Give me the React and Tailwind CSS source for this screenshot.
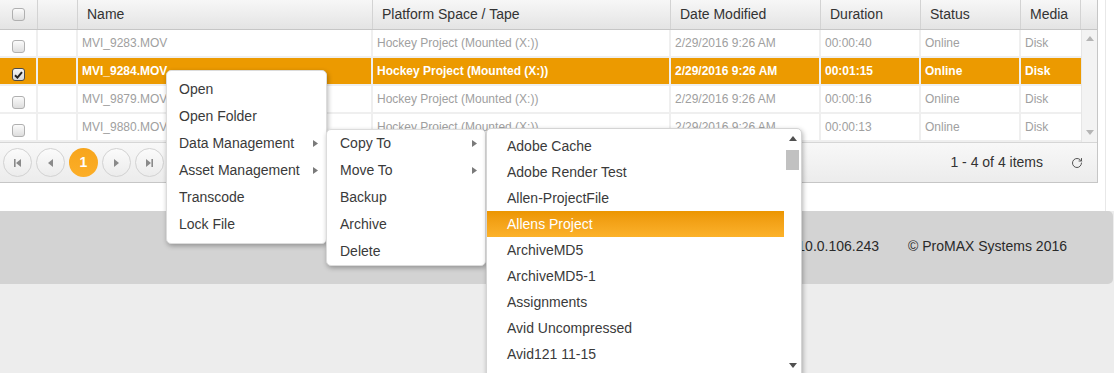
import React from "react";
import { RotateCw } from "lucide-react";

function Checkbox({ checked }) {
  return (
    <span
      className={`mt-[7px] flex h-[13px] w-[13px] items-center justify-center rounded-[3px] border ${
        checked
          ? "border-[#4a4a4a] bg-gradient-to-b from-[#f4f4f4] to-[#d8d8d8]"
          : "border-[#b0b0b0] bg-gradient-to-b from-[#fbfbfb] to-[#dedede]"
      }`}
    >
      {checked && (
        <svg width="9" height="8" viewBox="0 0 9 8">
          <path d="M1 4.3 L3.4 6.6 L8 1.2" stroke="#222" strokeWidth="2" fill="none" />
        </svg>
      )}
    </span>
  );
}

function Arrow() {
  return (
    <svg width="5" height="7" viewBox="0 0 5 7">
      <path d="M0 0 L5 3.5 L0 7Z" fill="#7a7a7a" />
    </svg>
  );
}

const rows = [
  { name: "MVI_9283.MOV", dur: "00:00:40" },
  { name: "MVI_9284.MOV", dur: "00:01:15", sel: true },
  { name: "MVI_9879.MOV", dur: "00:00:16" },
  { name: "MVI_9880.MOV", dur: "00:00:13" },
];

const headers = [
  { w: "w-[295px]", t: "Name" },
  { w: "w-[298px]", t: "Platform Space / Tape" },
  { w: "w-[150px]", t: "Date Modified" },
  { w: "w-[100px]", t: "Duration" },
  { w: "w-[100px]", t: "Status" },
  { w: "w-[60px]", t: "Media" },
];

function PagerBtn({ children }) {
  return (
    <div className="flex h-[29px] w-[29px] items-center justify-center rounded-full border border-[#d2d2d2] bg-gradient-to-b from-[#fbfbfb] to-[#ececec]">
      {children}
    </div>
  );
}

const listItems = [
  "Adobe Cache",
  "Adobe Render Test",
  "Allen-ProjectFile",
  "Allens Project",
  "ArchiveMD5",
  "ArchiveMD5-1",
  "Assignments",
  "Avid Uncompressed",
  "Avid121 11-15",
];

export default function App() {
  return (
    <div className="relative h-[373px] w-[1114px] overflow-hidden bg-[#ededed] font-['Liberation_Sans',Arial,sans-serif]">
      {/* white content area */}
      <div className="h-[211px] w-full bg-white">
        <div className="h-full w-[1106px] border-r border-[#e8e8e8]">
          <div className="w-[1098px] border-r border-b border-[#c6c6c6]">
            {/* header */}
            <div className="flex h-[30px] border-b border-[#c6c6c6] bg-gradient-to-b from-[#f7f7f7] to-[#e4e4e4] text-[14px] text-[#333]">
              <div className="flex w-[38px] justify-center border-r border-[#d3d3d3] pt-[8px]">
                <span className="flex h-[13px] w-[13px] rounded-[3px] border border-[#b0b0b0] bg-gradient-to-b from-[#fbfbfb] to-[#dedede]" />
              </div>
              <div className="w-[40px] border-r border-[#d3d3d3]" />
              {headers.map((h) => (
                <div key={h.t} className={`${h.w} flex items-center border-r border-[#d3d3d3] pl-[9px]`}>
                  {h.t}
                </div>
              ))}
              <div className="w-[16px]" />
            </div>
            {/* body */}
            <div className="flex">
              <div className="w-[1081px]">
                {rows.map((r) => (
                  <div
                    key={r.name}
                    className={`flex h-[28px] border-b-2 border-[#efefef] text-[12px] ${
                      r.sel ? "bg-[#ec9a00] font-bold text-white" : "bg-white text-[#a0a0a0]"
                    }`}
                  >
                    <div className="flex w-[38px] items-start justify-center border-r-2 border-[#efefef] pt-[3px]">
                      <Checkbox checked={r.sel} />
                    </div>
                    <div className="w-[40px] border-r-2 border-[#efefef]" />
                    <div className="flex w-[295px] items-center border-r-2 border-[#efefef] pl-[4px]">{r.name}</div>
                    <div className="flex w-[298px] items-center border-r-2 border-[#efefef] pl-[4px]">
                      Hockey Project (Mounted (X:))
                    </div>
                    <div className="flex w-[150px] items-center border-r-2 border-[#efefef] pl-[4px]">2/29/2016 9:26 AM</div>
                    <div className="flex w-[100px] items-center border-r-2 border-[#efefef] pl-[4px]">{r.dur}</div>
                    <div className="flex w-[100px] items-center border-r-2 border-[#efefef] pl-[4px]">Online</div>
                    <div className="flex w-[60px] items-center pl-[4px]">Disk</div>
                  </div>
                ))}
              </div>
              <div className="flex h-[112px] w-[16px] flex-col items-center justify-between border-l border-[#e6e6e6] bg-[#f3f3f3] pt-[6px] pb-[7px]">
                <svg width="8" height="5" viewBox="0 0 8 5">
                  <path d="M0 5 L4 0 L8 5Z" fill="#b5b5b5" />
                </svg>
                <svg width="8" height="5" viewBox="0 0 8 5">
                  <path d="M0 0 L4 5 L8 0Z" fill="#b5b5b5" />
                </svg>
              </div>
            </div>
            {/* pager */}
            <div className="flex h-[40px] items-center border-t border-[#d6d6d6] bg-gradient-to-b from-[#f8f8f8] to-[#ececec] pl-[3px] pr-[14px]">
              <div className="flex items-center gap-[4px]">
                <PagerBtn>
                  <svg width="7" height="8" viewBox="0 0 7 8">
                    <rect x="0" y="0" width="1.6" height="8" fill="#8a8a8a" />
                    <path d="M7 0 L2 4 L7 8Z" fill="#8a8a8a" />
                  </svg>
                </PagerBtn>
                <PagerBtn>
                  <svg width="5" height="8" viewBox="0 0 5 8">
                    <path d="M5 0 L0 4 L5 8Z" fill="#8a8a8a" />
                  </svg>
                </PagerBtn>
                <div className="flex h-[29px] w-[29px] items-center justify-center rounded-full bg-gradient-to-b from-[#f7a51c] to-[#fcae27] text-[14px] font-bold text-white">
                  1
                </div>
                <PagerBtn>
                  <svg width="5" height="8" viewBox="0 0 5 8">
                    <path d="M0 0 L5 4 L0 8Z" fill="#8a8a8a" />
                  </svg>
                </PagerBtn>
                <PagerBtn>
                  <svg width="7" height="8" viewBox="0 0 7 8">
                    <path d="M0 0 L5 4 L0 8Z" fill="#8a8a8a" />
                    <rect x="5.4" y="0" width="1.6" height="8" fill="#8a8a8a" />
                  </svg>
                </PagerBtn>
              </div>
              <div className="ml-auto text-[14px] text-[#333]">1 - 4 of 4 items</div>
              <RotateCw className="ml-[28px]" size={12} strokeWidth={2} color="#555" />
            </div>
          </div>
        </div>
      </div>
      {/* footer */}
      <div className="flex h-[73px] w-[1113px] items-center justify-end gap-[29px] rounded-r-[5px] bg-[#d3d3d3] pr-[46px] pb-[3px] text-[14px] text-[#2a2a2a]">
        <span>10.0.106.243</span>
        <span>© ProMAX Systems 2016</span>
      </div>

      {/* context menu 1 */}
      <div className="absolute top-[70px] left-[166px] w-[161px] rounded-[5px] border border-[#dcdcdc] bg-white py-[5px] text-[14px] text-[#3a3a3a] shadow-[1px_2px_5px_rgba(0,0,0,0.3)]">
        {["Open", "Open Folder", "Data Management", "Asset Management", "Transcode", "Lock File"].map((t, i) => (
          <div key={t} className="flex h-[27px] items-center pr-[8px] pl-[12px]">
            <span>{t}</span>
            {(i === 2 || i === 3) && (
              <span className="ml-auto">
                <Arrow />
              </span>
            )}
          </div>
        ))}
      </div>

      {/* context menu 2 */}
      <div className="absolute top-[129px] left-[326px] w-[160px] rounded-[5px] border border-[#dcdcdc] bg-white text-[14px] text-[#3a3a3a] shadow-[1px_2px_5px_rgba(0,0,0,0.3)]">
        {["Copy To", "Move To", "Backup", "Archive", "Delete"].map((t, i) => (
          <div key={t} className="flex h-[27px] items-center pr-[8px] pl-[13px]">
            <span>{t}</span>
            {i < 2 && (
              <span className="ml-auto">
                <Arrow />
              </span>
            )}
          </div>
        ))}
      </div>

      {/* list menu 3 */}
      <div className="absolute top-[128px] left-[486px] flex h-[250px] w-[316px] rounded-[5px] border border-[#d4d4d4] bg-white text-[14px] text-[#3a3a3a] shadow-[1px_2px_5px_rgba(0,0,0,0.3)]">
        <div className="w-[297px] pt-[4px]">
          {listItems.map((t) => (
            <div
              key={t}
              className={`flex h-[26px] items-center pl-[20px] ${
                t === "Allens Project" ? "bg-gradient-to-b from-[#ec9600] to-[#fcb22a] text-white" : ""
              }`}
            >
              {t}
            </div>
          ))}
        </div>
        <div className="flex w-[17px] flex-col items-center pt-[7px]">
          <svg width="8" height="5" viewBox="0 0 8 5">
            <path d="M0 5 L4 0 L8 5Z" fill="#505050" />
          </svg>
          <div className="mt-[9px] h-[20px] w-[13px] bg-[#c1c1c1]" />
          <svg className="mt-[193px]" width="8" height="5" viewBox="0 0 8 5">
            <path d="M0 0 L4 5 L8 0Z" fill="#505050" />
          </svg>
        </div>
      </div>
    </div>
  );
}
